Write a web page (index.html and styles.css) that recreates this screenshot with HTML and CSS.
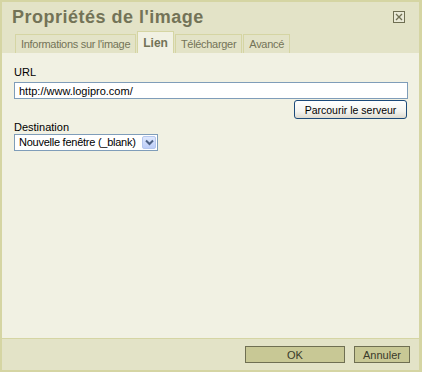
FILE: index.html
```html
<!DOCTYPE html>
<html lang="fr">
<head>
    <meta charset="UTF-8">
    <title>Propriétés de l'image</title>
    <link rel="stylesheet" href="styles.css">
</head>
<body>
    <div class="dialog">
        <div class="dlg-head">
            <div class="title-row">
                <h1>Propriétés de l'image</h1>
                <span class="close-btn" title="Fermer">
                    <svg width="12" height="12" viewBox="0 0 12 12">
                        <rect x="0.5" y="0.5" width="11" height="11" fill="#e9e9d6" stroke="#6f6f52"/>
                        <path d="M3 3 L9 9 M9 3 L3 9" stroke="#6f6f52" stroke-width="1.3"/>
                    </svg>
                </span>
            </div>
            <ul class="tabs">
                <li>Informations sur l'image</li>
                <li class="active">Lien</li>
                <li>Télécharger</li>
                <li>Avancé</li>
            </ul>
        </div>

        <div class="dlg-body">
            <label for="url">URL</label>
            <input type="text" id="url" class="txt" value="http://www.logipro.com/">
            <div class="browse-row">
                <button class="xp-btn">Parcourir le serveur</button>
            </div>

            <label class="lbl-dest">Destination</label>
            <div class="fake-select">
                <span class="sel-text">Nouvelle fenêtre (_blank)</span>
                <span class="sel-arrow">
                    <svg width="9" height="7" viewBox="0 0 9 7">
                        <path d="M1 1.5 L4.5 5 L8 1.5" fill="none" stroke="#4d6185" stroke-width="2"/>
                    </svg>
                </span>
            </div>
        </div>

        <div class="dlg-foot">
            <button class="foot-btn ok-btn">OK</button>
            <button class="foot-btn cancel-btn">Annuler</button>
        </div>
    </div>
</body>
</html>
```

FILE: styles.css
```css
body {
    margin: 0;
    font-family: 'Liberation Sans', Arial, sans-serif;
    font-size: 11px;
    background: #ffffff;
}
.dialog {
    width: 422px;
    height: 372px;
    box-sizing: border-box;
    border: 2px solid #d5d5a3;
    border-right-width: 3px;
    background: #e3e3c7;
    display: flex;
    flex-direction: column;
}
.dlg-head {
    height: 51px;
    display: flex;
    flex-direction: column;
}
.title-row {
    height: 29px;
    display: flex;
    justify-content: space-between;
    align-items: flex-start;
}
h1 {
    margin: 4px 0 0 10px;
    font-size: 18px;
    line-height: 22px;
    letter-spacing: 0.5px;
    font-weight: bold;
    color: #737357;
}
.close-btn {
    display: block;
    width: 12px;
    height: 12px;
    margin: 9px 14px 0 0;
}
.close-btn svg {
    display: block;
}
.tabs {
    list-style: none;
    margin: 0 0 0 13px;
    padding: 0;
    display: flex;
    align-items: flex-end;
    height: 22px;
}
.tabs li {
    height: 19px;
    box-sizing: border-box;
    padding: 3px 5px 0 5px;
    border: 1px solid #d5d5a3;
    border-bottom: none;
    margin-right: 1px;
    color: #737357;
    font-size: 11px;
    letter-spacing: -0.3px;
    line-height: 13px;
    background: #e3e3c7;
}
.tabs li.active {
    height: 22px;
    padding-top: 5px;
    background: #f1f1e3;
    font-weight: bold;
    letter-spacing: 0;
    font-size: 12px;
}
.dlg-body {
    flex: 1;
    background: #f1f1e3;
    padding: 13px 11px 0 12px;
    display: flex;
    flex-direction: column;
    align-items: flex-start;
}
.dlg-body label {
    display: block;
    line-height: 13px;
    color: #000;
}
.txt {
    margin-top: 3px;
    width: 100%;
    height: 17px;
    box-sizing: border-box;
    border: 1px solid #7f9db9;
    padding: 0 4px;
    font-family: 'Liberation Sans', Arial, sans-serif;
    font-size: 11px;
    background: #fff;
    color: #000;
}
.browse-row {
    width: 100%;
    display: flex;
    justify-content: flex-end;
    margin-top: 1px;
}
.xp-btn {
    width: 113px;
    height: 19px;
    margin-right: 1px;
    padding: 0;
    border: 1px solid #1c4a7a;
    border-radius: 3px;
    background: linear-gradient(#ffffff, #f4f4f0 60%, #dedbd0);
    font-family: 'Liberation Sans', Arial, sans-serif;
    font-size: 10.5px;
    color: #000;
}
.lbl-dest {
    margin-top: 2px;
}
.fake-select {
    margin-top: 0;
    width: 144px;
    height: 17px;
    box-sizing: border-box;
    border: 1px solid #7f9db9;
    background: #fff;
    display: flex;
    align-items: center;
    justify-content: space-between;
    padding: 0 1px 0 4px;
}
.sel-text {
    color: #000;
    line-height: 13px;
    letter-spacing: -0.25px;
    white-space: nowrap;
}
.sel-arrow {
    width: 14px;
    height: 13px;
    flex-shrink: 0;
    box-sizing: border-box;
    border: 1px solid #b5c7ee;
    border-radius: 2px;
    background: linear-gradient(#dfe8fd, #bccdf8);
    display: flex;
    align-items: center;
    justify-content: center;
}
.dlg-foot {
    height: 32px;
    box-sizing: border-box;
    border-top: 1px solid #d5d5a3;
    background: #e3e3c7;
    display: flex;
    justify-content: flex-end;
    align-items: flex-start;
    padding: 7px 9px 0 0;
    gap: 9px;
}
.foot-btn {
    height: 17px;
    padding: 0;
    border: 1px solid #6f6f52;
    background: #c8c895;
    font-family: 'Liberation Sans', Arial, sans-serif;
    font-size: 11px;
    color: #3a3a2a;
}
.ok-btn {
    width: 100px;
}
.cancel-btn {
    width: 56px;
}
```
